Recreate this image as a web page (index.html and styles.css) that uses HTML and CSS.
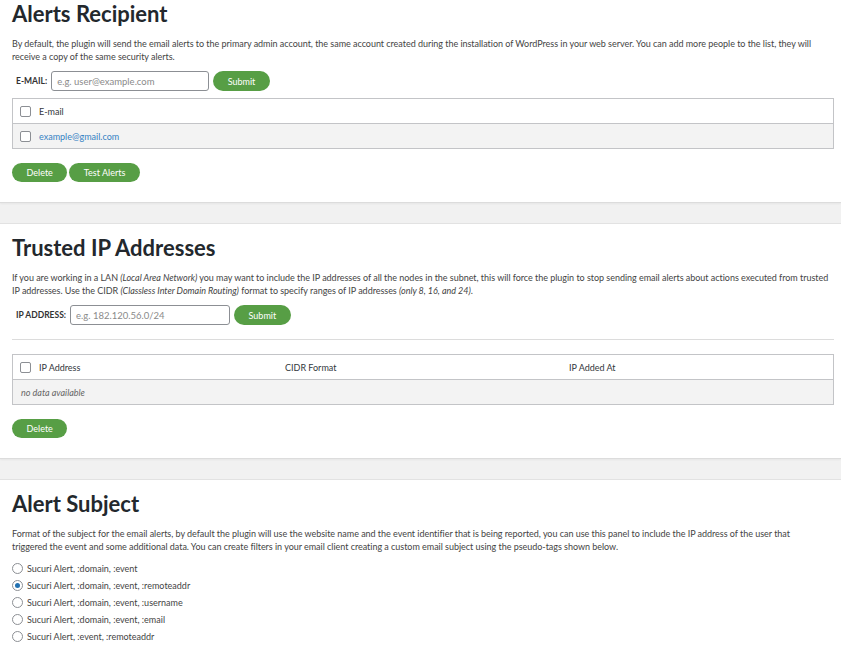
FILE: index.html
```html
<!DOCTYPE html>
<html>
<head>
<meta charset="utf-8">
<link rel="stylesheet" href="styles.css">
</head>
<body>
<div class="page">
  <section class="card">
    <h2 class="title">Alerts Recipient</h2>
    <p class="desc">By default, the plugin will send the email alerts to the primary admin account, the same account created during the installation of WordPress in your web server. You can add more people to the list, they will receive a copy of the same security alerts.</p>
    <form class="form-row">
      <label class="form-label">E-MAIL:</label>
      <input class="text-input email-input" type="text" placeholder="e.g. user@example.com">
      <button type="button" class="btn">Submit</button>
    </form>
    <table class="data-table">
      <thead>
        <tr><th class="col-check"><span class="check"></span></th><th>E-mail</th></tr>
      </thead>
      <tbody>
        <tr class="alt"><td class="col-check"><span class="check"></span></td><td><span class="link">example@gmail.com</span></td></tr>
      </tbody>
    </table>
    <div class="actions">
      <button type="button" class="btn">Delete</button>
      <button type="button" class="btn">Test Alerts</button>
    </div>
  </section>

  <section class="card">
    <h2 class="title">Trusted IP Addresses</h2>
    <p class="desc">If you are working in a LAN <em>(Local Area Network)</em> you may want to include the IP addresses of all the nodes in the subnet, this will force the plugin to stop sending email alerts about actions executed from trusted IP addresses. Use the CIDR <em>(Classless Inter Domain Routing)</em> format to specify ranges of IP addresses <em>(only 8, 16, and 24)</em>.</p>
    <form class="form-row">
      <label class="form-label">IP ADDRESS:</label>
      <input class="text-input ip-input" type="text" placeholder="e.g. 182.120.56.0/24">
      <button type="button" class="btn">Submit</button>
    </form>
    <hr class="divider">
    <table class="data-table ip-table">
      <thead>
        <tr><th class="col-check"><span class="check"></span></th><th class="col-ip">IP Address</th><th class="col-cidr">CIDR Format</th><th>IP Added At</th></tr>
      </thead>
      <tbody>
        <tr class="alt"><td colspan="4" class="empty">no data available</td></tr>
      </tbody>
    </table>
    <div class="actions">
      <button type="button" class="btn">Delete</button>
    </div>
  </section>

  <section class="card">
    <h2 class="title">Alert Subject</h2>
    <p class="desc">Format of the subject for the email alerts, by default the plugin will use the website name and the event identifier that is being reported, you can use this panel to include the IP address of the user that<br>triggered the event and some additional data. You can create filters in your email client creating a custom email subject using the pseudo-tags shown below.</p>
    <ul class="radio-list">
      <li><span class="radio"></span>Sucuri Alert, :domain, :event</li>
      <li><span class="radio checked"></span>Sucuri Alert, :domain, :event, :remoteaddr</li>
      <li><span class="radio"></span>Sucuri Alert, :domain, :event, :username</li>
      <li><span class="radio"></span>Sucuri Alert, :domain, :event, :email</li>
      <li><span class="radio"></span>Sucuri Alert, :event, :remoteaddr</li>
    </ul>
  </section>
</div>
</body>
</html>
```
FILE: styles.css
```css
html, body {
  margin: 0;
  padding: 0;
}
body {
  background: #f1f1f1;
  font-family: Lato, "Liberation Sans", sans-serif;
  font-size: 9px;
  color: #444;
  overflow: hidden;
}
.page {
  margin-top: -11px;
}
.card {
  background: #fff;
  border-top: 1px solid #e2e2e2;
  border-bottom: 1px solid #dcdcdc;
  box-shadow: 0 1px 2px rgba(0,0,0,0.05);
  padding: 12px 7px 20px 12px;
  margin-bottom: 20px;
}
.title {
  margin: 0;
  font-size: 22px;
  line-height: 24px;
  font-weight: 700;
  color: #23282d;
}
.desc {
  margin: 11px 0 0;
  line-height: 13px;
  color: #444;
  letter-spacing: -0.03px;
}
.desc em {
  font-style: italic;
}
.form-row {
  display: flex;
  align-items: center;
  gap: 4px;
  margin: 8px 0 0;
  padding-left: 4px;
  height: 20px;
}
.form-label {
  font-weight: 700;
  font-size: 8.5px;
  color: #333;
}
.text-input {
  box-sizing: border-box;
  height: 20px;
  border: 1px solid #8c8f94;
  border-radius: 3px;
  padding: 0 5px;
  font-family: inherit;
  font-size: 9.5px;
  color: #444;
  outline: none;
}
.text-input::placeholder {
  color: #8a8a8a;
}
.email-input { width: 158px; }
.ip-input { width: 160px; }
.btn {
  box-sizing: border-box;
  height: 20px;
  border: none;
  border-radius: 10px;
  background: #579e45;
  color: #fff;
  font-family: inherit;
  font-size: 9px;
  padding: 0 14.5px;
  cursor: pointer;
}
.data-table {
  width: 100%;
  border-collapse: collapse;
  margin-top: 7px;
  border: 1px solid #c3c4c7;
  table-layout: fixed;
}
.data-table th,
.data-table td {
  height: 24px;
  padding: 0 8px;
  text-align: left;
  font-weight: 400;
  color: #32373c;
  vertical-align: middle;
}
.data-table thead tr {
  border-bottom: 1px solid #c3c4c7;
  background: #fff;
}
.data-table .alt {
  background: #f3f3f3;
}
.data-table .col-check {
  width: 11px;
  padding: 0 0 0 7px;
}
.ip-table .col-ip { width: 230px; }
.ip-table .col-cidr { width: 268px; }
.check {
  display: inline-block;
  box-sizing: border-box;
  width: 11px;
  height: 11px;
  border: 1px solid #8c8f94;
  border-radius: 2px;
  background: #fff;
  vertical-align: middle;
}
.link {
  color: #3582c4;
}
.data-table .empty {
  font-style: italic;
  color: #666;
}
.divider {
  border: 0;
  border-top: 1px solid #dcdcdc;
  margin: 14px 0 0;
  height: 0;
}
.divider + .data-table {
  margin-top: 14px;
}
.actions {
  display: flex;
  gap: 2px;
  margin-top: 14px;
}
.actions .btn {
  height: 19px;
}
.radio-list {
  list-style: none;
  margin: 7px 0 0;
  padding: 0;
}
.radio-list li {
  display: flex;
  align-items: center;
  height: 17px;
  color: #444;
}
.radio {
  box-sizing: border-box;
  width: 11px;
  height: 11px;
  border: 1px solid #8c8f94;
  border-radius: 50%;
  background: #fff;
  margin-right: 4px;
  display: inline-flex;
  align-items: center;
  justify-content: center;
}
.radio.checked::after {
  content: "";
  width: 5px;
  height: 5px;
  border-radius: 50%;
  background: #2271b1;
}
```
